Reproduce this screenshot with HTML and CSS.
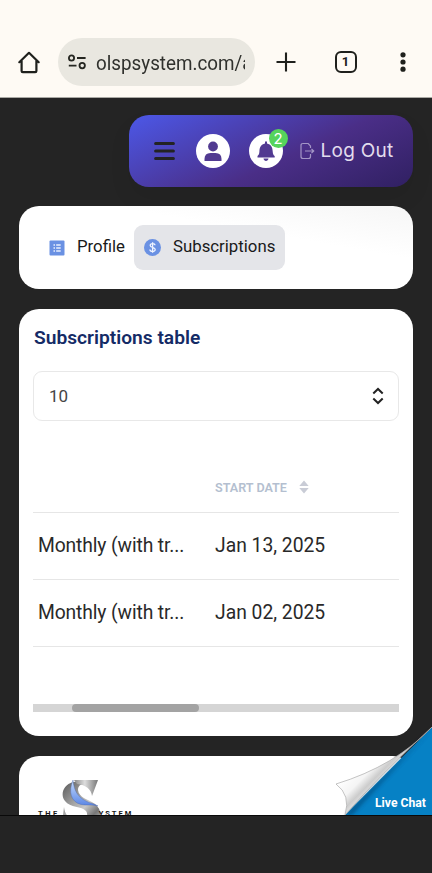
FILE: index.html
```html
<!DOCTYPE html>
<html lang="en">
<head>
<meta charset="utf-8">
<meta name="viewport" content="width=device-width">
<title>Subscriptions</title>
<link rel="stylesheet" href="styles.css">
</head>
<body>
<header class="browser">
  <svg class="home" width="24" height="24" viewBox="0 0 24 24" fill="none" stroke="#1f201c" stroke-width="2.2" stroke-linejoin="round" stroke-linecap="round"><path d="M2.3 12.2 12 2.8l9.7 9.4M4.6 10.8V21q0 1.2 1.2 1.2h12.4q1.2 0 1.2-1.2V10.8"/></svg>
  <div class="address">
    <svg width="20" height="18" viewBox="0 0 20 18" fill="none" stroke="#252621" stroke-width="1.8"><circle cx="4.5" cy="5" r="2.6"/><path d="M10 5h8.6M1.8 12.6h7.700"/><circle cx="15.2" cy="12.6" r="2.7"/></svg>
    <div class="url"><span>olspsystem.com/a</span></div>
  </div>
  <svg class="plus" width="20" height="20" viewBox="0 0 20 20" stroke="#1f201c" stroke-width="2.1"><path d="M.5 10h19M10 .5v19"/></svg>
  <div class="tabs">1</div>
  <svg class="dots" width="6" height="20" viewBox="0 0 6 20" fill="#1f201c"><circle cx="3" cy="2.8" r="2.6"/><circle cx="3" cy="10" r="2.6"/><circle cx="3" cy="17.2" r="2.6"/></svg>
</header>
<main class="page">
  <nav class="topbar">
    <svg class="menu" width="21" height="20" viewBox="0 0 21 20" stroke="#232323" stroke-width="3" stroke-linecap="round"><path d="M1.6 2.5h17.8M1.6 10h17.8M1.6 17.5h17.8"/></svg>
    <span class="round"><svg width="34" height="34" viewBox="0 0 34 34" fill="#513a91"><circle cx="17" cy="12.5" r="4.9"/><path d="M8.5 27v-2q0-6 6-6h5q6 0 6 6v2z"/></svg></span>
    <span class="round bell"><svg width="34" height="34" viewBox="0 0 34 34" fill="#513a91"><path d="M16 7.5h2v2c4 .8 5.500 3.800 5.700 8 .1 3 1 3.800 2 4.600v1.400H8.500V22c1-.8 1.800-1.700 1.900-4.500.1-4.200 1.700-7.200 5.600-8zM14.500 24.500h5c-.3 3.200-4.700 3.200-5 0z"/></svg><b class="badge">2</b></span>
    <svg class="exit" width="15" height="18" viewBox="0 0 15 18" fill="none" stroke="#a395c6" stroke-width="1.2"><path d="M10.500 6V4L8.200 1.500H3Q1 1.500 1 3.500v11q0 2 2 2h5.500q2 0 2-2V12M5 9h8.500M11.500 7l2.200 2-2.200 2"/></svg>
    <span class="logout">Log Out</span>
  </nav>
  <section class="card tabcard">
    <a class="tab"><svg width="16" height="16" viewBox="0 0 16 16"><rect x=".5" y=".5" width="15" height="15" rx="1" fill="#6a91e3"/><path d="M4.500 5H6M4.500 8H6M4.500 11H6M7.200 5h4.500M7.200 8h4.500M7.200 11h4.500" stroke="#e9f0ff" stroke-width="1.5"/></svg><span>Profile</span></a>
    <a class="tab active"><svg width="17" height="17" viewBox="0 0 17 17"><circle cx="8.500" cy="8.500" r="8.500" fill="#6a91e3"/><path d="M11 6.300C10.800 4 6.200 4 6.200 6.400c0 2.500 5 1.600 5 4.100 0 2.600-5.200 2.500-5.300-.1M8.600 3.200v10.600" fill="none" stroke="#eff4ff" stroke-width="1.3"/></svg><span>Subscriptions</span></a>
  </section>
  <section class="card tablecard">
    <h1>Subscriptions table</h1>
    <div class="select"><span>10</span><svg width="12" height="18" viewBox="0 0 12 18" fill="none" stroke="#222" stroke-width="2"><path d="M1.300 6.500 6 2l4.700 4.500M1.300 11.500 6 16l4.700-4.500"/></svg></div>
    <div class="grid">
      <div class="row head"><span></span><span class="sort">START DATE<svg width="10" height="14" viewBox="0 0 10 14" fill="#c9ccd6"><path d="M5 .5 9.700 6H.3zM.3 8h9.400L5 13.500z"/></svg></span></div>
      <div class="row"><span class="plan">Monthly (with tr...</span><span>Jan 13, 2025</span></div>
      <div class="row"><span class="plan">Monthly (with tr...</span><span>Jan 02, 2025</span></div>
    </div>
    <div class="scroll"><i></i></div>
  </section>
  <section class="card logocard">
    <div class="logo">
      <span class="the">THE</span>
      <svg width="42" height="46" viewBox="0 0 42 46">
        <defs>
          <linearGradient id="metal" x1="0" y1="0" x2="1" y2="1"><stop offset="0" stop-color="#555"/><stop offset=".35" stop-color="#999"/><stop offset=".6" stop-color="#c8c8c8"/><stop offset=".8" stop-color="#777"/><stop offset="1" stop-color="#bbb"/></linearGradient>
          <linearGradient id="cap"><stop offset="0" stop-color="#888"/><stop offset=".45" stop-color="#ddd"/><stop offset="1" stop-color="#777"/></linearGradient>
          <linearGradient id="blue" x1="0" y1="0" x2="0" y2="1"><stop offset="0" stop-color="#c5dcff"/><stop offset="1" stop-color="#5a85e4"/></linearGradient>
        </defs>
        <path d="M11 4C1 7-2 17 3 23c5 7 17 5 21 10 3 4 0 9-8 9C7 42 3 37 2 29L0 46h34c6-7 6-14-1-20-7-5-16-6-17-14 0-5 4-7 10-6l-4-3z" fill="url(#metal)"/>
        <path d="M12 2h24l-6 16C29 11 24 7 15 6z" fill="url(#cap)"/>
        <path d="M11 2C6 14 9 24 19 26.500c6 1.200 11-.3 17 1.500-4-2.500-8-2.500-12-5C16 19 12 13 11 2z" fill="url(#blue)" stroke="#4a65a8" stroke-width=".4"/>
      </svg>
      <span class="system">YSTEM</span>
    </div>
  </section>
  <div class="chat">
    <svg width="98" height="88" viewBox="0 0 98 88">
      <defs>
        <linearGradient id="curl" gradientUnits="userSpaceOnUse" x1="26" y1="34" x2="46" y2="54"><stop offset="0" stop-color="#fff"/><stop offset=".5" stop-color="#f4f4f4"/><stop offset=".8" stop-color="#ccc"/><stop offset="1" stop-color="#e2e2e2"/></linearGradient>
        <filter id="soft" x="-20%" y="-20%" width="140%" height="140%"><feGaussianBlur stdDeviation="2"/></filter>
      </defs>
      <path d="M98 0v88H11z" fill="#0681c5"/>
      <path d="M98 1 17 88h-5z" fill="#013a67" opacity=".8" filter="url(#soft)"/>
      <path d="M98 0Q61 39 2 57q15 11 9 31Q45 49 98 0z" fill="url(#curl)" stroke="#aaa" stroke-width=".7"/>
    </svg>
    <span>Live Chat</span>
  </div>
</main>
<footer class="bottom"></footer>
</body>
</html>
```
FILE: styles.css
```css
* { box-sizing: border-box; }
body { margin: 0; width: 432px; height: 873px; overflow: hidden; background: #242424; font-family: Roboto, sans-serif; color: #292929; }
svg { display: block; flex: none; }
.browser { height: 98px; padding: 38px 26px 0 17px; display: flex; align-items: flex-start; background: #fefaf4; border-bottom: 1px solid #aaa9a4; }
.home { margin-top: 12px; }
.address { width: 197px; height: 48px; margin-left: 16.5px; padding: 0 9px; border-radius: 24px; background: #e9e7e0; display: flex; align-items: center; }
.url { width: 149px; margin-left: 9.5px; padding-top: 1px; overflow: hidden; white-space: nowrap; font-size: 20px; line-height: 28px; color: #30312d; }
.url span { display: inline-block; transform: scaleX(.94); transform-origin: 0 0; }
.plus { margin: 14px 0 0 21px; }
.tabs { width: 22px; height: 22px; margin: 13px 0 0 39px; border: 2px solid #1f201c; border-radius: 6px; display: grid; place-items: center; font-size: 13px; font-weight: 700; line-height: 18px; color: #1f201c; }
.dots { margin: 14px 0 0 43px; }
.page { position: relative; height: 717px; padding: 17px 19px 0; overflow: hidden; background: #242424; }
.topbar { width: 284px; height: 72px; margin-left: 110px; padding: 0 20px 0 25px; display: flex; align-items: center; border-radius: 20px; background: linear-gradient(155deg, #4c58e8 0%, #4a2e87 57%, #302062 100%); box-shadow: 0 12px 22px #00000012; }
.round { position: relative; width: 34px; height: 34px; margin-left: 21px; border-radius: 50%; background: #fff; }
.bell { margin-left: 18.5px; }
.badge { position: absolute; left: 20px; top: -5px; width: 19px; height: 19px; border-radius: 50%; background: #56d35c; color: #fff; font: 15px/19px Inter, sans-serif; text-align: center; }
.exit { margin-left: 17px; }
.logout { margin-left: 6px; font: 19px/28px Inter, sans-serif; color: #e2dced; letter-spacing: .25px; white-space: nowrap; }
.card { background: #fff; border-radius: 20px; }
.tabcard { height: 83px; margin-top: 19px; padding: 19px 20px; display: flex; background: linear-gradient(190deg, #f6f6f6 0, #fff 35%); }
.tab { height: 45px; display: flex; align-items: center; padding: 0 10px; gap: 12px; border-radius: 9px; font-size: 16.800px; color: #191919; white-space: nowrap; }
.tab span { margin-top: -4px; }
.tab:first-child { width: 95px; }
.active { width: 151px; background: #e4e5e9; }
.tablecard { height: 427px; margin-top: 20px; padding: 16px 14px 0; }
h1 { margin: 0; padding-left: 1px; font-size: 19.200px; line-height: 26px; font-weight: 600; color: #142b66; }
.select { height: 50px; margin-top: 20px; padding: 0 14px 0 15px; border: 1px solid #e8e8e8; border-radius: 9px; display: flex; align-items: center; justify-content: space-between; font-size: 17px; color: #454545; }
.grid { margin-top: 42px; }
.row { height: 67px; padding: 0 0 1px 5px; display: grid; grid-template-columns: 177px 1fr; align-items: center; border-bottom: 1px solid #e6e6e6; font-size: 19.300px; white-space: nowrap; }
.plan { letter-spacing: -.12px; }
.head { height: 50px; font-size: 12.600px; font-weight: 600; color: #b4bfd0; }
.sort { display: flex; align-items: center; gap: 12px; }
.scroll { height: 8px; margin-top: 57px; padding-left: 39px; background: #d5d5d5; }
.scroll i { display: block; width: 127px; height: 8px; border-radius: 4px; background: #a3a3a3; }
.logocard { height: 100px; margin-top: 20px; padding: 22px 19px; }
.logo { display: flex; align-items: flex-start; font-size: 7.500px; font-weight: 700; line-height: 10px; color: #181818; }
.logo span { margin-top: 31px; letter-spacing: 2.500px; }
.logo svg { margin-left: 2px; }
.logo .system { margin-left: -5px; letter-spacing: 2px; }
.chat { position: absolute; right: 0; bottom: 0; width: 98px; height: 88px; }
.chat span { position: absolute; right: 6px; bottom: 3px; color: #fff; font-size: 12.200px; font-weight: 700; line-height: 17px; white-space: nowrap; }
.bottom { height: 58px; border-top: 1px solid #090909; background: #242424; }
```
